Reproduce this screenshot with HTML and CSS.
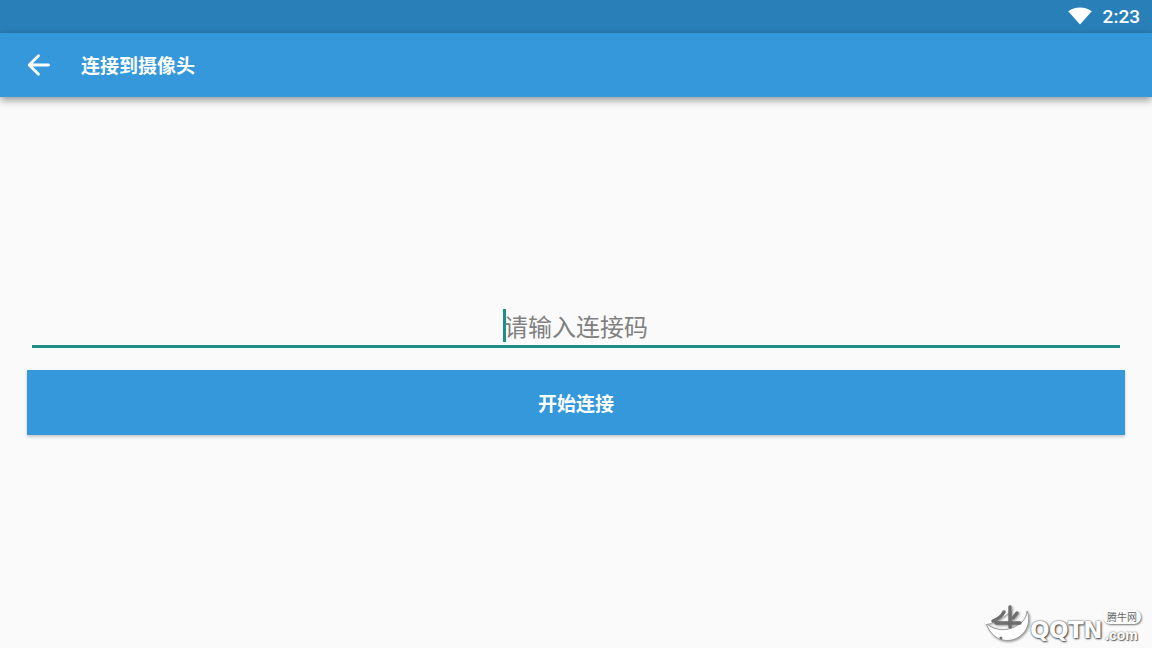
FILE: index.html
```html
<!DOCTYPE html>
<html lang="zh-CN">
<head>
<meta charset="utf-8">
<title>连接到摄像头</title>
<link rel="stylesheet" href="styles.css">
</head>
<body>
<div class="status-bar">
  <svg class="wifi" width="24" height="18" viewBox="0 0 24 18"><path d="M12 17.500 0.200 4.200C3.400 1.700 7.400 0.400 12 0.400s8.600 1.300 11.800 3.800z" fill="#fff"/></svg>
  <span class="clock">2:23</span>
</div>
<header class="toolbar">
  <svg class="back" width="24" height="24" viewBox="0 0 24 24"><path d="M22.500 12H3.500M12.500 2.700 3.200 12l9.300 9.300" fill="none" stroke="#fff" stroke-width="2.800" stroke-linecap="round" stroke-linejoin="round"/></svg>
  <h1 class="title">连接到摄像头</h1>
</header>
<main class="content">
  <div class="field">
    <span class="caret"></span>
    <span class="placeholder">请输入连接码</span>
  </div>
  <button class="connect">开始连接</button>
</main>
<div class="watermark">
  <svg class="wm-logo" width="46" height="40" viewBox="0 0 46 40">
    <path d="M1 18C10 27 26 27 37 17c3-3 5-7 5-11 4 9 1 20-8 26-11 7-27 4-33-14z" fill="#fff" stroke="#999" stroke-width="1"/>
    <path d="M1 17c8-1 17-7 24-13" fill="none" stroke="#fff" stroke-width="4" stroke-linecap="round"/>
    <path d="M19 7c-2 4-6 7-11 9M25 2v20M32 8l-4 5M11 18h24" fill="none" stroke="#6e6e6e" stroke-width="3.400" stroke-linecap="round"/>
    <circle cx="16" cy="33" r="1.500" fill="#777"/>
  </svg>
  <span class="wm-brand">QQTN</span><span class="wm-com">.com</span>
  <span class="wm-tag">腾牛网</span>
</div>
</body>
</html>
```
FILE: styles.css
```css
* { box-sizing: border-box; }
html, body { margin: 0; padding: 0; }
body {
  width: 1152px;
  height: 648px;
  overflow: hidden;
  position: relative;
  background: #fafafa;
  font-family: Roboto, "Noto Sans CJK SC", sans-serif;
  display: flex;
  flex-direction: column;
}
.status-bar {
  height: 33px;
  flex: none;
  background: #2980b9;
  display: flex;
  align-items: center;
  justify-content: flex-end;
  padding-right: 12px;
  gap: 11px;
}
.wifi { display: block; margin-top: -1px; }
.clock { color: #fff; font-size: 19px; font-weight: 500; line-height: 20px; margin-top: 1px; }
.toolbar {
  height: 64px;
  flex: none;
  background: #3498db;
  display: flex;
  align-items: center;
  padding-left: 26px;
  gap: 31px;
  box-shadow: 0 3px 8px rgba(0, 0, 0, 0.42);
  position: relative;
}
.back { display: block; }
.title {
  margin: 0;
  color: #fff;
  font-size: 19px;
  font-weight: 700;
  line-height: 24px;
  font-family: "Noto Sans CJK SC", sans-serif;
}
.content {
  flex: 1;
  padding: 212px 27px 0;
  display: flex;
  flex-direction: column;
}
.field {
  margin: 0 5px;
  height: 39px;
  border-bottom: 3px solid #1e8f86;
  display: flex;
  justify-content: center;
  align-items: flex-start;
  position: relative;
}
.placeholder {
  color: #808080;
  font-size: 24px;
  line-height: 33px;
  font-family: "Noto Sans CJK SC", sans-serif;
}
.caret {
  width: 3px;
  height: 33px;
  background: #1e8f86;
  position: absolute;
  left: 470.500px;
  top: 0;
}
.connect {
  margin-top: 22px;
  height: 65px;
  border: 0;
  background: #3498db;
  color: #fff;
  font-size: 19px;
  font-weight: 700;
  font-family: "Noto Sans CJK SC", sans-serif;
  box-shadow: 0 2px 3px rgba(0, 0, 0, 0.2);
  padding: 0;
}
.watermark {
  position: absolute;
  right: 4px;
  bottom: 1px;
  width: 163px;
  height: 44px;
}
.wm-logo { position: absolute; left: 0; top: 2px; filter: drop-shadow(1px 1px 1px rgba(0,0,0,.4)); }
.wm-brand {
  position: absolute;
  left: 45px;
  top: 13px;
  color: #fff;
  font: 700 23px/28px "DejaVu Sans", sans-serif;
  letter-spacing: -0.5px;
  text-shadow: 0 0 2px #444, 1px 1px 2px #444;
}
.wm-com {
  position: absolute;
  left: 120px;
  top: 24px;
  color: #fff;
  font: 700 14px/16px "Liberation Sans", sans-serif;
  text-shadow: 0 0 2px #666, 1px 1px 1px #666;
}
.wm-tag {
  position: absolute;
  left: 118px;
  top: 7px;
  padding: 0 4px;
  background: #fff;
  border-radius: 7px;
  color: #666;
  font: 400 10px/14px "Noto Sans CJK SC", sans-serif;
  box-shadow: 1px 1px 2px #777;
}
```
